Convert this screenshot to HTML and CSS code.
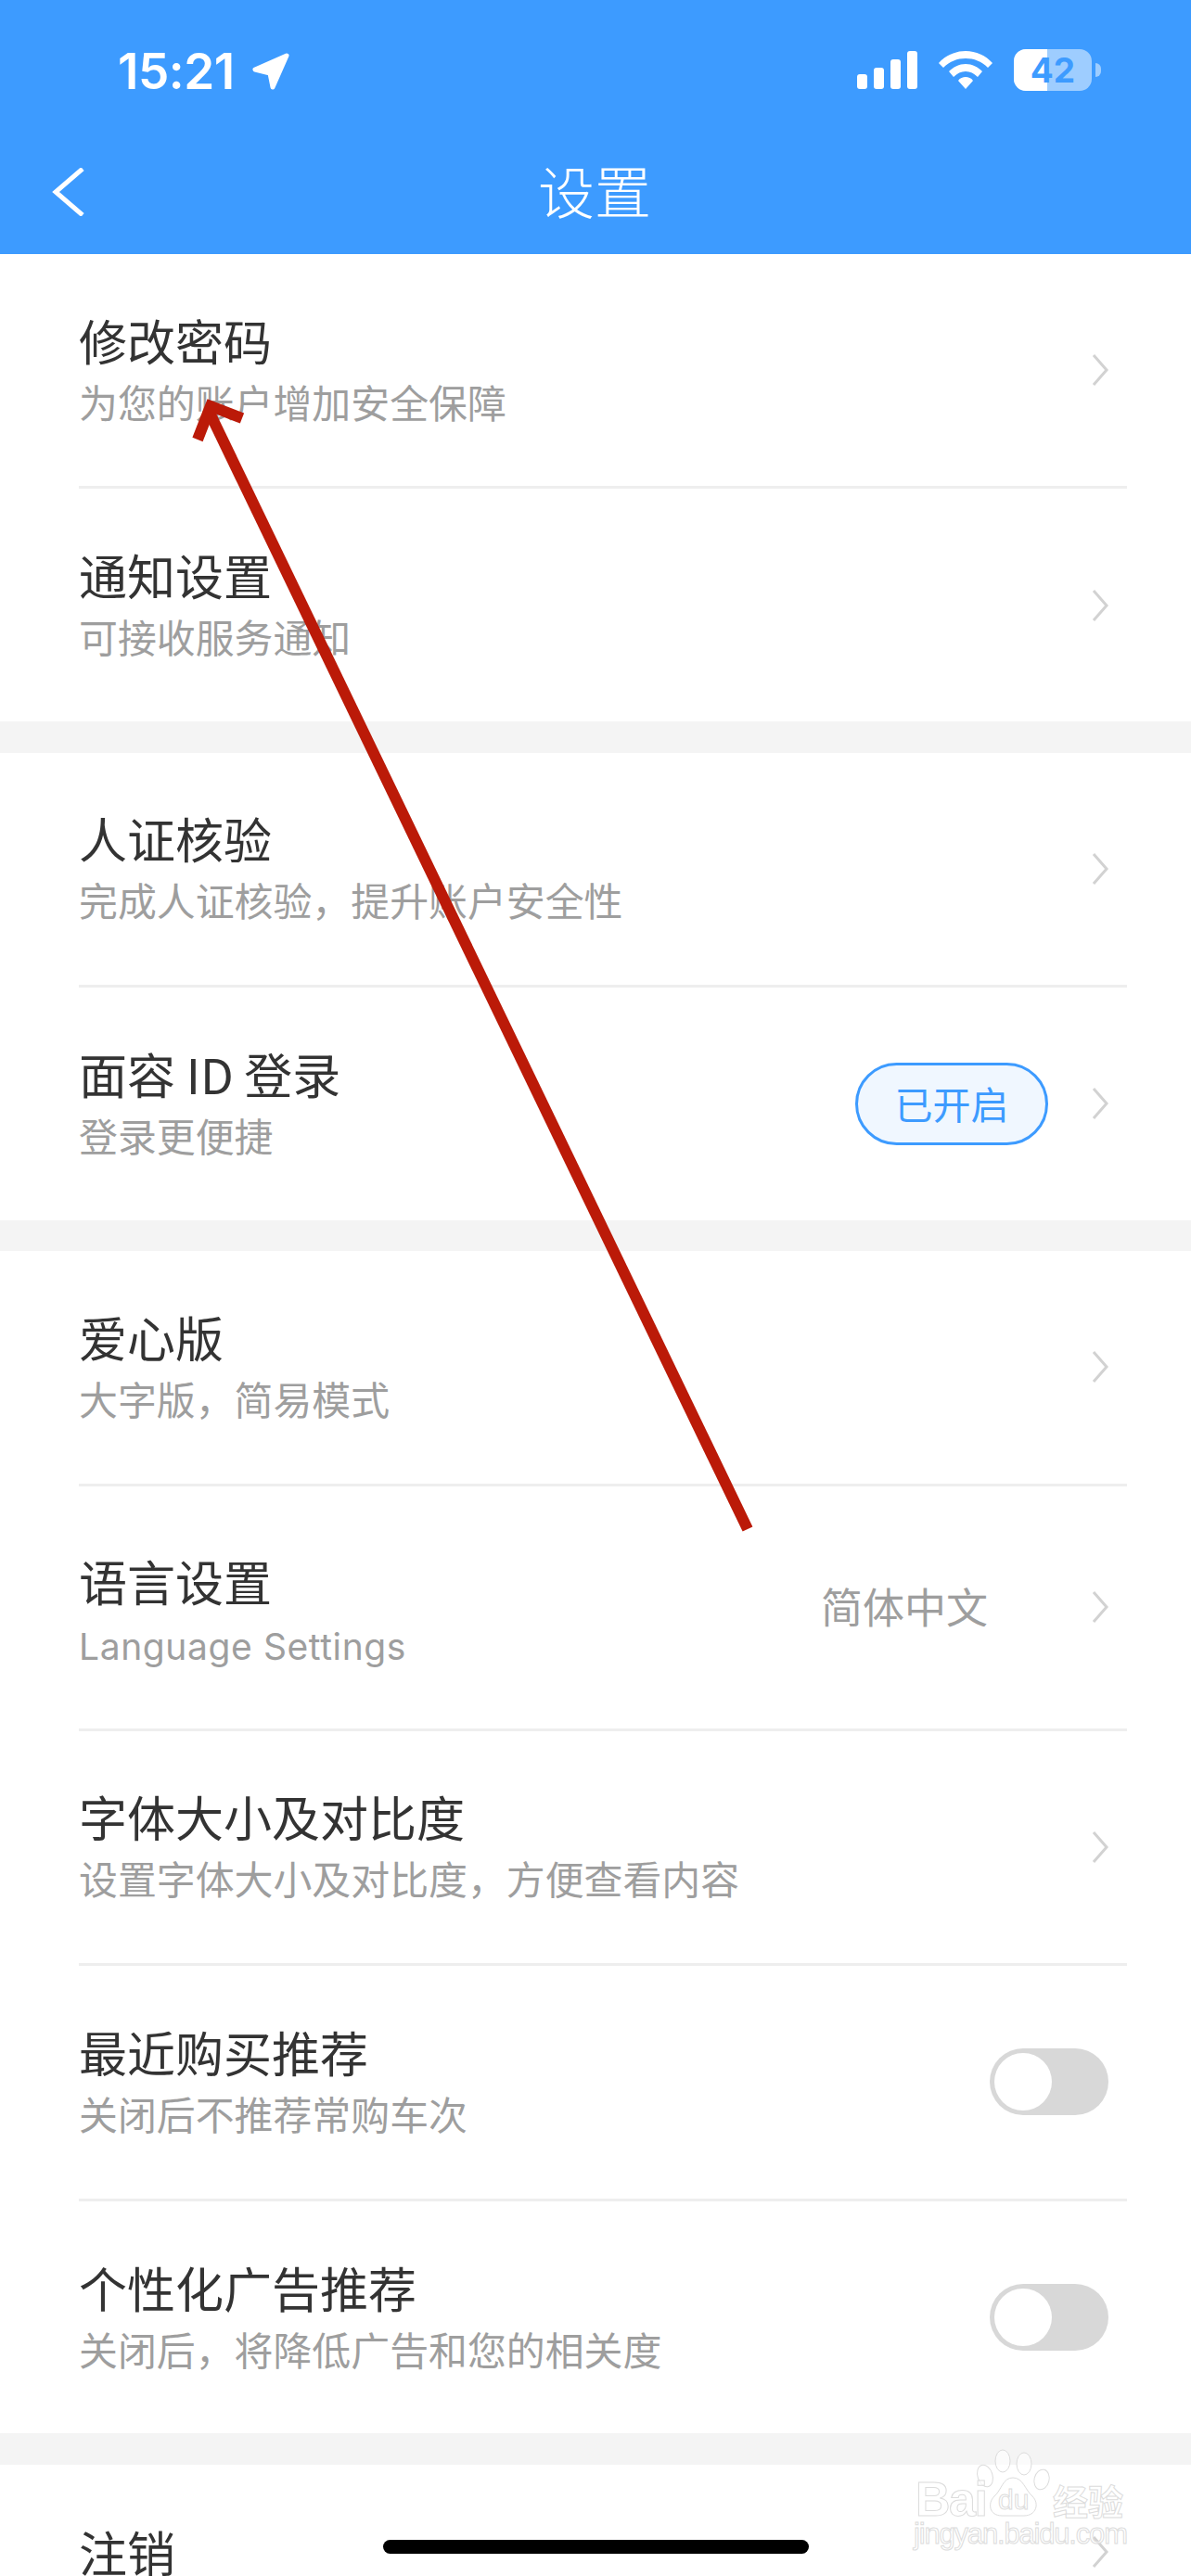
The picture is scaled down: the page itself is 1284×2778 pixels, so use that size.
FILE: index.html
```html
<html>
<head>
  <meta charset="utf-8">
  <link rel="stylesheet" href="styles.css">
</head>
<body>
  <div class="phone">
    <div class="header">
      <div class="status-bar">
        <div class="status-left">
          <span class="time">15:21</span>
          <svg class="location" viewBox="0 0 42 41"><path d="M38 4 L4 19 L20 23 L23 38 Z"/></svg>
        </div>
        <div class="status-right">
          <div class="signal"><i class="bar1"></i><i class="bar2"></i><i class="bar3"></i><i class="bar4"></i></div>
          <svg class="wifi" viewBox="0 0 58 41"><path d="M29 0 C40 0 51 5 58 13 L53 18 C46 11 38 8 29 8 C20 8 12 11 5 18 L0 13 C7 5 18 0 29 0 Z M29 14 C36 14 42 17 47 22 L42 28 C38 24 34 22 29 22 C24 22 20 24 16 28 L11 22 C16 17 22 14 29 14 Z M29 28 C32 28 35 29 37 32 L29 41 L21 32 C23 29 26 28 29 28 Z"/></svg>
          <div class="battery"><div class="battery-fill"></div><span class="battery-text">42</span></div>
          <div class="battery-nub"></div>
        </div>
      </div>
      <div class="nav-bar">
        <svg class="back" viewBox="0 0 36 52"><path d="M33 1 L4 26 L33 51"/></svg>
        <div class="nav-title">设置</div>
      </div>
    </div>

    <div class="group">
      <div class="row">
        <div class="row-text"><div class="row-title">修改密码</div><div class="row-sub">为您的账户增加安全保障</div></div>
        <svg class="chevron" viewBox="0 0 18 36"><path d="M2 2 L16 18 L2 34"/></svg>
      </div>
      <div class="row">
        <div class="row-text"><div class="row-title">通知设置</div><div class="row-sub">可接收服务通知</div></div>
        <svg class="chevron" viewBox="0 0 18 36"><path d="M2 2 L16 18 L2 34"/></svg>
      </div>
    </div>

    <div class="group">
      <div class="row">
        <div class="row-text"><div class="row-title">人证核验</div><div class="row-sub">完成人证核验，提升账户安全性</div></div>
        <svg class="chevron" viewBox="0 0 18 36"><path d="M2 2 L16 18 L2 34"/></svg>
      </div>
      <div class="row">
        <div class="row-text"><div class="row-title">面容 ID 登录</div><div class="row-sub">登录更便捷</div></div>
        <div class="badge">已开启</div>
        <svg class="chevron" viewBox="0 0 18 36"><path d="M2 2 L16 18 L2 34"/></svg>
      </div>
    </div>

    <div class="group">
      <div class="row">
        <div class="row-text"><div class="row-title">爱心版</div><div class="row-sub">大字版，简易模式</div></div>
        <svg class="chevron" viewBox="0 0 18 36"><path d="M2 2 L16 18 L2 34"/></svg>
      </div>
      <div class="row row-tall">
        <div class="row-text"><div class="row-title">语言设置</div><div class="row-sub row-sub-latin">Language Settings</div></div>
        <div class="row-value">简体中文</div>
        <svg class="chevron" viewBox="0 0 18 36"><path d="M2 2 L16 18 L2 34"/></svg>
      </div>
      <div class="row">
        <div class="row-text"><div class="row-title">字体大小及对比度</div><div class="row-sub">设置字体大小及对比度，方便查看内容</div></div>
        <svg class="chevron" viewBox="0 0 18 36"><path d="M2 2 L16 18 L2 34"/></svg>
      </div>
      <div class="row">
        <div class="row-text"><div class="row-title">最近购买推荐</div><div class="row-sub">关闭后不推荐常购车次</div></div>
        <div class="toggle"><div class="knob"></div></div>
      </div>
      <div class="row">
        <div class="row-text"><div class="row-title">个性化广告推荐</div><div class="row-sub">关闭后，将降低广告和您的相关度</div></div>
        <div class="toggle"><div class="knob"></div></div>
      </div>
    </div>

    <div class="group">
      <div class="row row-single">
        <div class="row-text"><div class="row-title">注销</div></div>
        <svg class="chevron" viewBox="0 0 18 36"><path d="M2 2 L16 18 L2 34"/></svg>
      </div>
    </div>

    <!-- watermark -->
    <svg class="watermark" viewBox="0 0 240 120">
      <g class="wm-shape">
        <ellipse cx="98" cy="14" rx="8" ry="12"/>
        <ellipse cx="121" cy="17" rx="8" ry="12"/>
        <ellipse cx="79" cy="30" rx="8" ry="12" transform="rotate(-18 79 30)"/>
        <ellipse cx="140" cy="34" rx="8" ry="11" transform="rotate(14 140 34)"/>
        <path d="M109 32 C120 32 122 45 130 52 C138 60 134 73 121 73 L97 73 C84 73 81 60 89 52 C97 45 98 32 109 32 Z"/>
      </g>
      <text class="wm-big" x="4" y="73" textLength="78">Bai</text>
      <text class="wm-du" x="93" y="66">du</text>
      <text class="wm-cn" x="152" y="72">经验</text>
      <text class="wm-url" x="2" y="103" textLength="231">jingyan.baidu.com</text>
    </svg>

    <!-- red arrow drawn over the screenshot -->
    <svg class="arrow" viewBox="0 0 1284 2778">
      <path d="M806 1649 L224 441"/>
      <path d="M213 474 L227 438 L261 451"/>
    </svg>

    <div class="home-bar"></div>
  </div>
</body>
</html>
```

FILE: styles.css
```css
html, body {
  margin: 0;
  padding: 0;
}

body {
  background: #f4f4f4;
  font-family: "Noto Sans CJK SC", "Noto Sans", sans-serif;
}

.phone {
  position: relative;
  width: 1284px;
  height: 2778px;
  overflow: hidden;
  background: #f4f4f4;
}

.header {
  height: 274px;
  background: #3d9bff;
  color: #fff;
}

.status-bar {
  height: 150px;
  display: flex;
  justify-content: space-between;
  box-sizing: border-box;
  padding: 53px 97px 0 127px;
}

.status-left {
  display: flex;
  align-items: flex-start;
}

.time {
  font-family: Inter, sans-serif;
  font-size: 53px;
  font-weight: 600;
  line-height: 46px;
  letter-spacing: -0.5px;
  margin-top: 1px;
}

.location {
  width: 42px;
  height: 41px;
  margin: 3px 0 0 18px;
  fill: #fff;
  stroke: #fff;
  stroke-width: 5;
  stroke-linejoin: round;
}

.status-right {
  display: flex;
  align-items: flex-start;
}

.signal {
  display: flex;
  align-items: flex-end;
  gap: 7px;
  height: 41px;
  margin: 2px 23px 0 0;
}

.signal i {
  display: block;
  width: 11px;
  background: #fff;
  border-radius: 3px;
}

.bar1 { height: 16px; }
.bar2 { height: 23px; }
.bar3 { height: 32px; }
.bar4 { height: 41px; }

.wifi {
  width: 58px;
  height: 41px;
  margin: 2px 23px 0 0;
  fill: #fff;
}

.battery {
  position: relative;
  width: 84px;
  height: 45px;
  border-radius: 13px;
  background: rgba(255,255,255,0.5);
  overflow: hidden;
}

.battery-fill {
  width: 36px;
  height: 45px;
  background: #fff;
}

.battery-text {
  position: absolute;
  left: 0;
  right: 0;
  top: 0;
  text-align: center;
  font-family: Inter, sans-serif;
  font-size: 37px;
  font-weight: 700;
  line-height: 45px;
  color: #3d9bff;
}

.battery-nub {
  width: 6px;
  height: 15px;
  margin: 15px 0 0 4px;
  border-radius: 0 8px 8px 0;
  background: rgba(255,255,255,0.5);
}

.nav-bar {
  position: relative;
  height: 124px;
  display: flex;
  align-items: center;
  justify-content: center;
}

.back {
  position: absolute;
  left: 56px;
  top: 31px;
  width: 36px;
  height: 52px;
  fill: none;
  stroke: #fff;
  stroke-width: 5;
}

.nav-title {
  font-size: 61px;
  font-weight: 300;
  line-height: 70px;
  margin: -14px 2px 0 0;
}

.group {
  background: #fff;
  padding-left: 85px;
  margin-bottom: 33.5px;
}

.row {
  display: flex;
  align-items: center;
  height: 250px;
  margin-right: 69px;
  padding-right: 20px;
  border-bottom: 3px solid #eeeeee;
}

.row:last-child {
  border-bottom: none;
  height: 251px;
}

.group:nth-child(4) .row {
  height: 250.6px;
}

.group:nth-child(4) .row-tall {
  height: 261px;
}

.row-single,
.row-single:last-child {
  height: 188px;
}

.row-text {
  flex: 1;
}

.row-tall .row-text {
  padding-top: 18px;
}

.row-title {
  font-size: 52px;
  line-height: 67px;
  color: #333;
}

.row-sub {
  font-size: 41.9px;
  line-height: 66px;
  color: #9e9e9e;
}

.row-sub-latin {
  font-family: Inter, sans-serif;
  font-size: 39px;
  line-height: 76px;
  letter-spacing: 0.6px;
}

.row-value {
  font-size: 45px;
  color: #9e9e9e;
  margin: 0 112px 3px 0;
}

.chevron {
  width: 18px;
  height: 36px;
  fill: none;
  stroke: #d2d2d2;
  stroke-width: 3;
}

.badge {
  box-sizing: border-box;
  width: 208px;
  height: 89px;
  margin-right: 47px;
  border: 3.5px solid #3d9bff;
  border-radius: 45px;
  background: #f0f7ff;
  color: #3d9bff;
  font-size: 41px;
  line-height: 80px;
  text-align: center;
}

.toggle {
  box-sizing: border-box;
  width: 128px;
  height: 72px;
  padding: 5px;
  border-radius: 36px;
  background: #d8d8d8;
}

.knob {
  width: 62px;
  height: 62px;
  border-radius: 50%;
  background: #fff;
}

.home-bar {
  position: absolute;
  left: 413px;
  top: 2739px;
  width: 459px;
  height: 15px;
  border-radius: 8px;
  background: #000;
}

.watermark {
  position: absolute;
  left: 983px;
  top: 2640px;
  width: 240px;
  height: 120px;
}

.wm-shape ellipse, .wm-shape path {
  fill: rgba(255,255,255,0.6);
  stroke: #dcdcdc;
  stroke-width: 1;
}

.watermark text {
  fill: rgba(255,255,255,0.7);
  stroke: #dcdcdc;
  stroke-width: 1;
  font-family: "Liberation Sans", sans-serif;
}

.wm-big {
  font-size: 52px;
  font-weight: 700;
}

.wm-du {
  font-size: 30px;
}

.watermark .wm-cn {
  font-family: "Noto Sans CJK SC", sans-serif;
  font-size: 38px;
  font-weight: 700;
}

.wm-url {
  font-size: 31px;
}

.arrow {
  position: absolute;
  left: 0;
  top: 0;
  width: 1284px;
  height: 2778px;
  fill: none;
  stroke: #bb1a08;
  stroke-width: 12;
}
```
